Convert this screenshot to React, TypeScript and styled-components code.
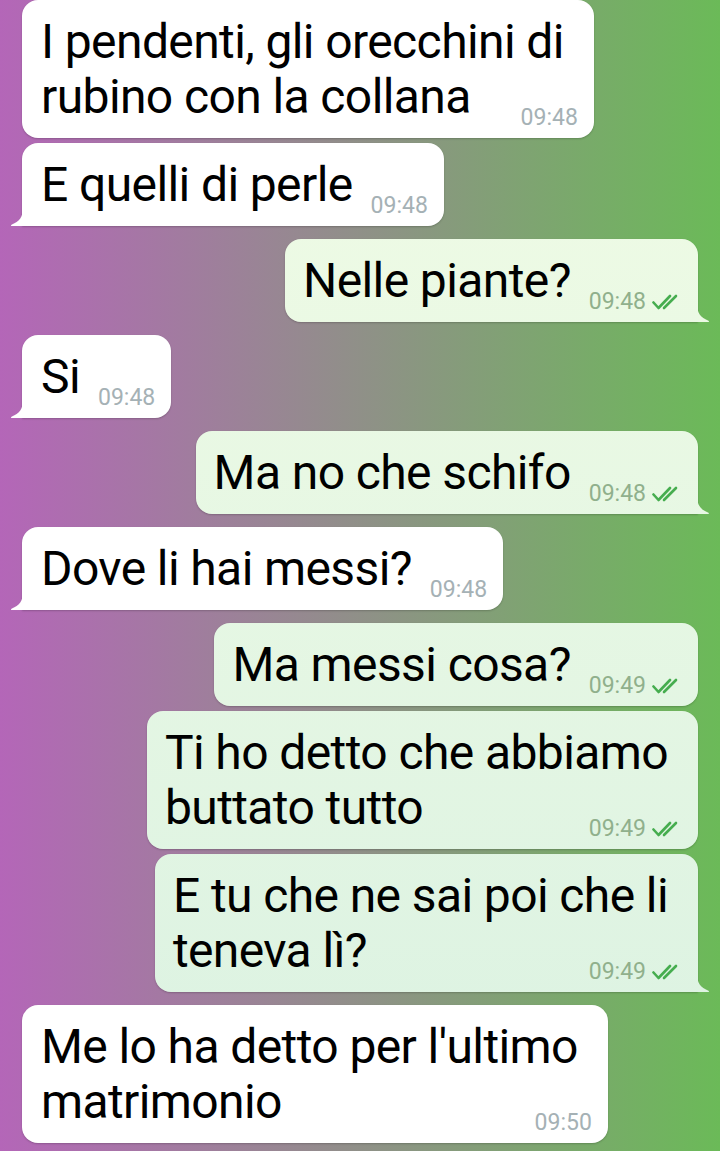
import React from 'react';
import styled, { createGlobalStyle } from 'styled-components';

const GlobalStyle = createGlobalStyle`
  html, body { margin: 0; padding: 0; }
  body { font-family: Roboto, "Noto Sans", sans-serif; }
`;

const Screen = styled.div`
  width: 720px;
  height: 1151px;
  overflow: hidden;
  box-sizing: border-box;
  padding: 0 22px;
  display: flex;
  flex-direction: column;
  background: linear-gradient(to right, #b466b8 0%, #6bba58 100%);
`;

const Row = styled.div<{ $out: boolean; $gap: number }>`
  display: flex;
  justify-content: ${(p) => (p.$out ? 'flex-end' : 'flex-start')};
  margin-top: ${(p) => p.$gap}px;
`;

const Bubble = styled.div<{ $out: boolean; $tail: boolean }>`
  position: relative;
  display: flex;
  flex-direction: column;
  padding: 14px 16px 6px ${(p) => (p.$out ? 18 : 19)}px;
  border-radius: 16px;
  ${(p) => (p.$tail ? (p.$out ? 'border-bottom-right-radius: 0;' : 'border-bottom-left-radius: 0;') : '')}
  background: ${(p) =>
    p.$out ? 'linear-gradient(to bottom, #f1fce5 0%, #dbf2e2 100%) fixed' : '#ffffff'};
  box-shadow: 0 1px 2px rgba(0, 0, 0, 0.2);

  &::after {
    content: '';
    display: ${(p) => (p.$tail ? 'block' : 'none')};
    position: absolute;
    bottom: 0;
    ${(p) => (p.$out ? 'right: -12px;' : 'left: -12px;')}
    width: 13px;
    height: 18px;
    background: inherit;
    clip-path: ${(p) =>
      p.$out
        ? "path('M0 0 C0 9 4 14 11 16.4 C12.5 16.9 12.2 18 11 18 L0 18 Z')"
        : "path('M13 0 C13 9 9 14 2 16.4 C0.5 16.9 0.8 18 2 18 L13 18 Z')"};
  }
`;

const Line = styled.div`
  font-size: 48px;
  letter-spacing: -0.6px;
  line-height: 55px;
  color: #000;
  white-space: pre;
  padding-right: 14px;
`;

const LastRow = styled.div`
  display: flex;
  align-items: flex-end;
  justify-content: space-between;
  gap: 4px;
`;

const LastLine = styled(Line)`
  margin-bottom: 8px;
`;

const Meta = styled.div<{ $out: boolean }>`
  display: flex;
  align-items: center;
  gap: 6px;
  font-size: 23px;
  line-height: 28px;
  white-space: nowrap;
  color: ${(p) => (p.$out ? '#90b08c' : '#a5b1b5')};
`;

const Checks = () => (
  <svg width="30" height="16" viewBox="0 0 30 16" fill="none">
    <path d="M1.5 8.5 L6.5 14 L18 2" stroke="#46ad4f" strokeWidth="2.6" strokeLinecap="round" strokeLinejoin="round" />
    <path d="M12 14 L24 2" stroke="#46ad4f" strokeWidth="2.6" strokeLinecap="round" />
  </svg>
);

type Msg = { out: boolean; lines: string[]; time: string; tail: boolean };

const messages: Msg[] = [
  { out: false, lines: ['I pendenti, gli orecchini di', 'rubino con la collana'], time: '09:48', tail: false },
  { out: false, lines: ['E quelli di perle'], time: '09:48', tail: true },
  { out: true, lines: ['Nelle piante?'], time: '09:48', tail: true },
  { out: false, lines: ['Si'], time: '09:48', tail: true },
  { out: true, lines: ['Ma no che schifo'], time: '09:48', tail: true },
  { out: false, lines: ['Dove li hai messi?'], time: '09:48', tail: true },
  { out: true, lines: ['Ma messi cosa?'], time: '09:49', tail: false },
  { out: true, lines: ['Ti ho detto che abbiamo', 'buttato tutto'], time: '09:49', tail: false },
  { out: true, lines: ['E tu che ne sai poi che li', 'teneva lì?'], time: '09:49', tail: true },
  { out: false, lines: ["Me lo ha detto per l'ultimo", 'matrimonio'], time: '09:50', tail: false },
];

export default function App() {
  return (
    <>
      <GlobalStyle />
      <Screen>
        {messages.map((m, i) => {
          const prev = messages[i - 1];
          const gap = i === 0 ? 0 : prev.out === m.out ? 5 : 13;
          const head = m.lines.slice(0, -1);
          const last = m.lines[m.lines.length - 1];
          return (
            <Row key={i} $out={m.out} $gap={gap}>
              <Bubble $out={m.out} $tail={m.tail}>
                {head.map((l, j) => (
                  <Line key={j}>{l}</Line>
                ))}
                <LastRow>
                  <LastLine>{last}</LastLine>
                  <Meta $out={m.out}>
                    <span>{m.time}</span>
                    {m.out && <Checks />}
                  </Meta>
                </LastRow>
              </Bubble>
            </Row>
          );
        })}
      </Screen>
    </>
  );
}
